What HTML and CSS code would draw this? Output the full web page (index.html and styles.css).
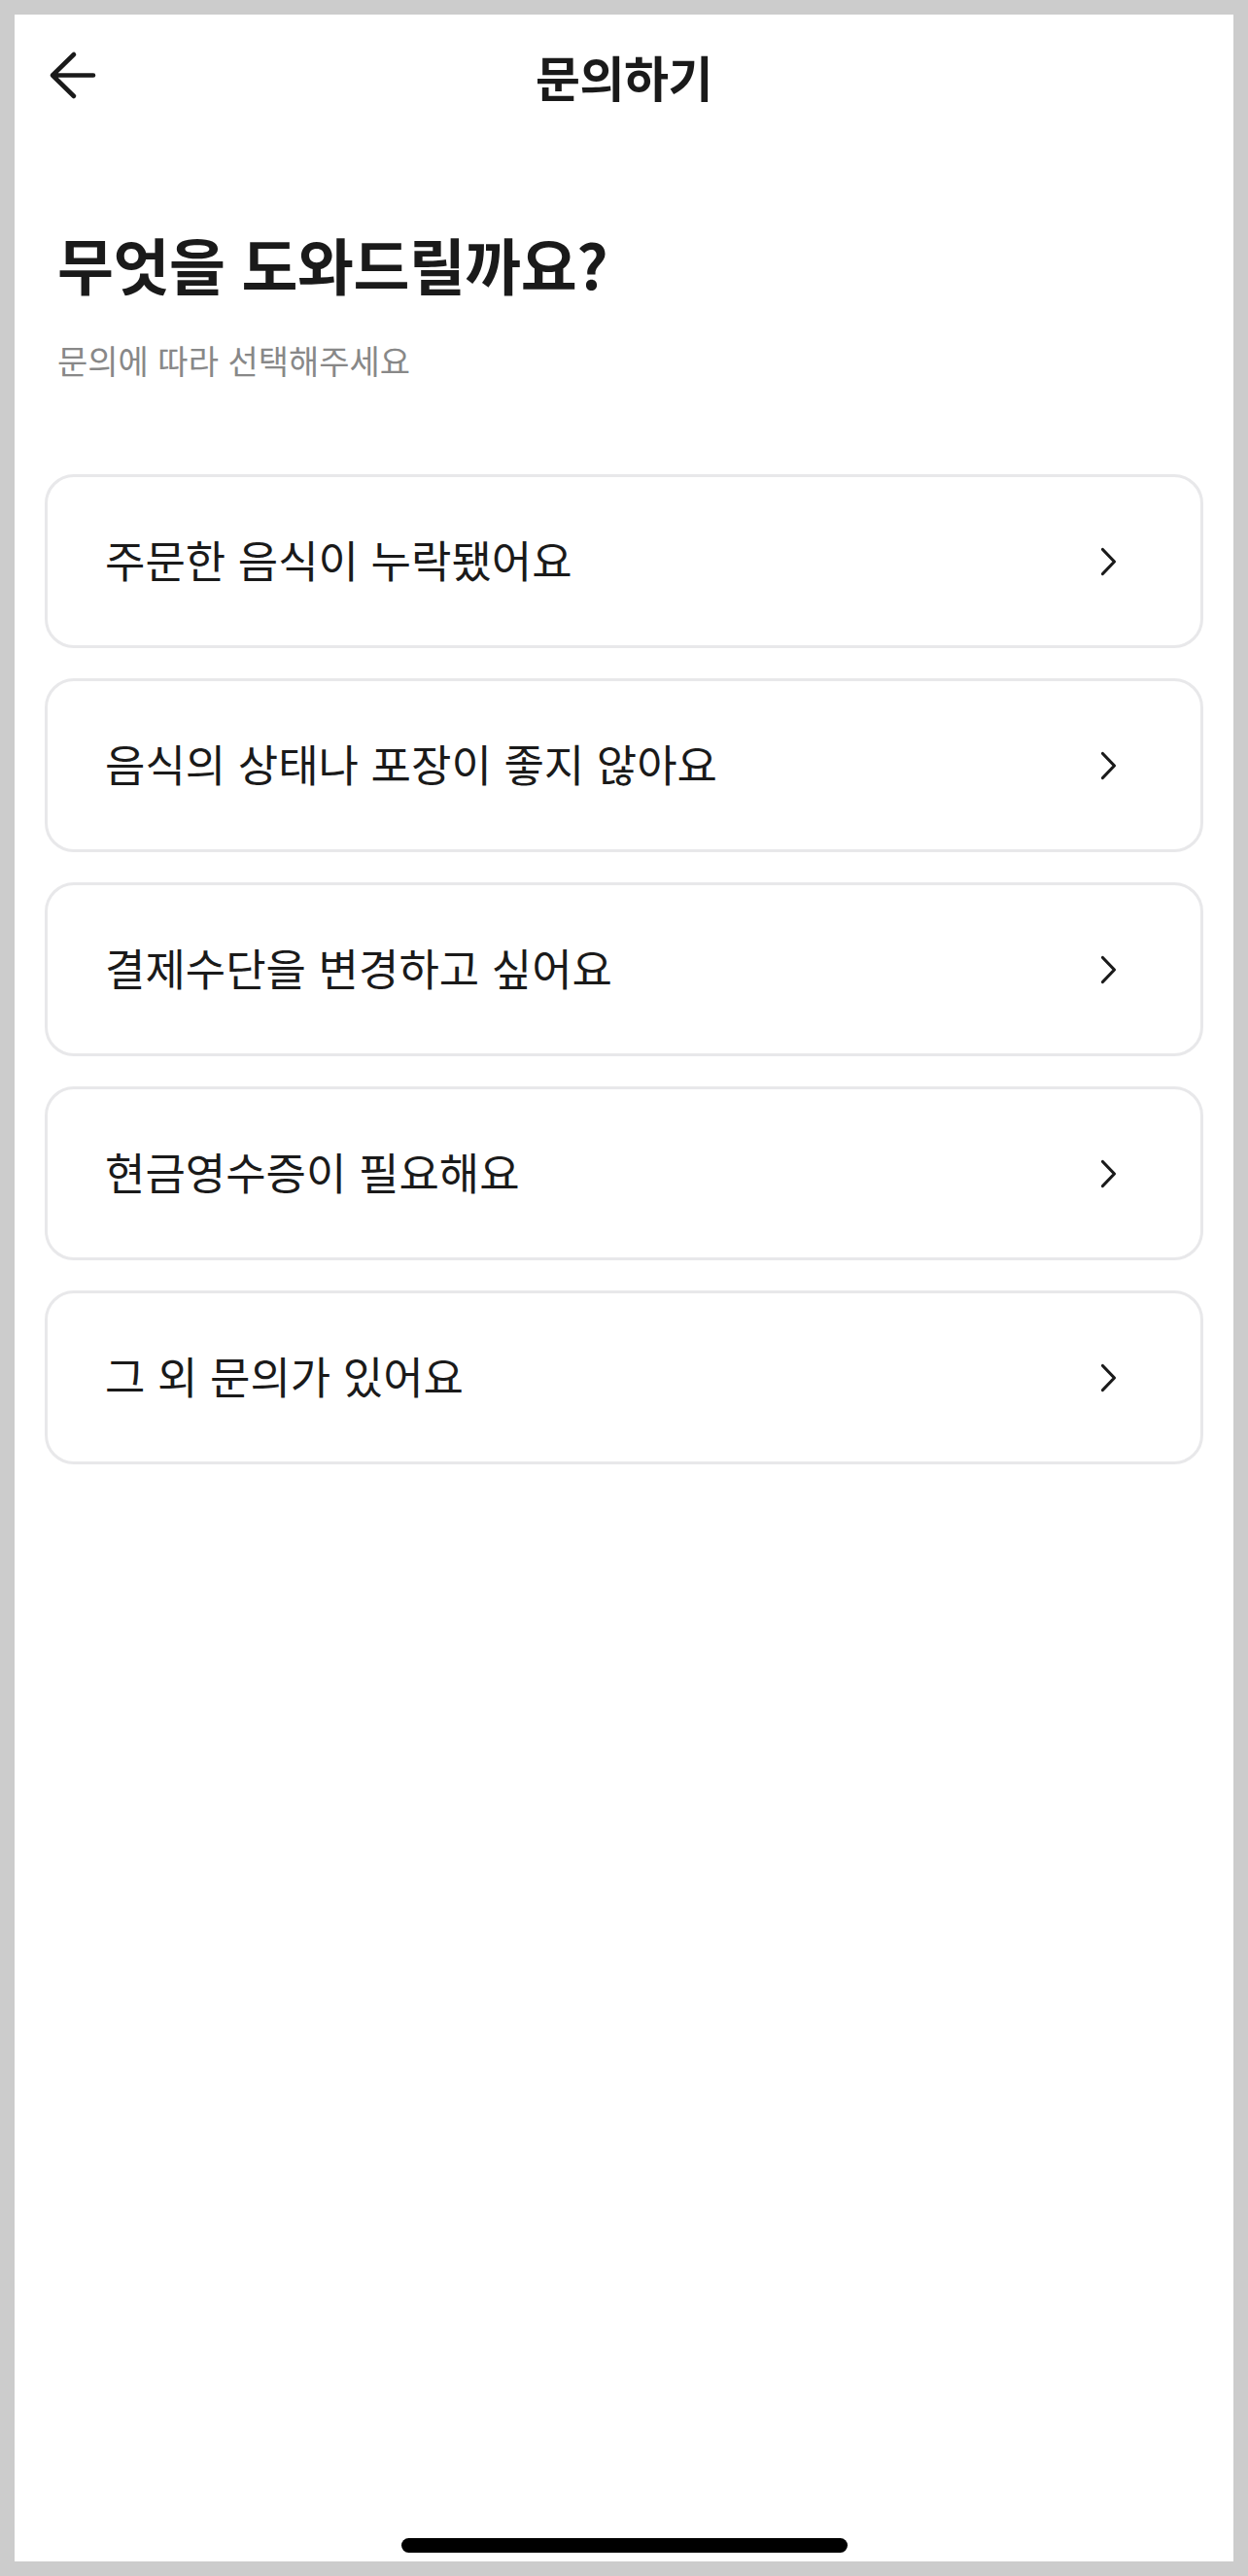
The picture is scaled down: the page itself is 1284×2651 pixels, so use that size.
FILE: index.html
```html
<!DOCTYPE html>
<html lang="ko">
<head>
    <meta charset="UTF-8">
    <meta name="viewport" content="width=device-width, initial-scale=1.0">
    <title>문의하기</title>
    <link rel="stylesheet" href="styles.css">
</head>
<body>
    <div class="screen">
        <header class="topbar">
            <button class="back" aria-label="뒤로가기">
                <svg width="52" height="52" viewBox="0 0 52 52" fill="none" stroke="#1a1a1a" stroke-width="4.6" stroke-linecap="round" stroke-linejoin="round">
                    <path d="M6 25.5H48M28 4L6 25.5L28 47"/>
                </svg>
            </button>
            <h1>문의하기</h1>
            <span></span>
        </header>

        <section class="intro">
            <h2>무엇을 도와드릴까요?</h2>
            <p>문의에 따라 선택해주세요</p>
        </section>

        <ul class="menu">
            <li class="menu-item">
                <span>주문한 음식이 누락됐어요</span>
                <svg class="chevron" width="24" height="32" viewBox="0 0 24 32"><polyline points="6.5,3.5 18.5,16 6.5,28.5"/></svg>
            </li>
            <li class="menu-item">
                <span>음식의 상태나 포장이 좋지 않아요</span>
                <svg class="chevron" width="24" height="32" viewBox="0 0 24 32"><polyline points="6.5,3.5 18.5,16 6.5,28.5"/></svg>
            </li>
            <li class="menu-item">
                <span>결제수단을 변경하고 싶어요</span>
                <svg class="chevron" width="24" height="32" viewBox="0 0 24 32"><polyline points="6.5,3.5 18.5,16 6.5,28.5"/></svg>
            </li>
            <li class="menu-item">
                <span>현금영수증이 필요해요</span>
                <svg class="chevron" width="24" height="32" viewBox="0 0 24 32"><polyline points="6.5,3.5 18.5,16 6.5,28.5"/></svg>
            </li>
            <li class="menu-item">
                <span>그 외 문의가 있어요</span>
                <svg class="chevron" width="24" height="32" viewBox="0 0 24 32"><polyline points="6.5,3.5 18.5,16 6.5,28.5"/></svg>
            </li>
        </ul>

        <div class="home-bar"></div>
    </div>
</body>
</html>
```

FILE: styles.css
```css
/* Inquiry screen */
* { margin: 0; padding: 0; box-sizing: border-box; }
body { background: #cccccc; font-family: "Noto Sans CJK KR", "Noto Sans", sans-serif; color: #1a1a1a; }
.screen { margin: 15px; height: 2621px; background: #fff; display: flex; flex-direction: column; }

.topbar { height: 130px; display: grid; grid-template-columns: 1fr auto 1fr; align-items: center; padding: 0 33px 4px; }
.back { background: none; border: none; width: 52px; height: 52px; display: flex; cursor: pointer; }
.topbar h1 { font-size: 50px; font-weight: 700; line-height: 60px; letter-spacing: -0.5px; }

.intro { padding: 86px 44px 0; }
.intro h2 { font-size: 63px; font-weight: 700; line-height: 80px; letter-spacing: -0.5px; }
.intro p { margin-top: 40px; font-size: 34px; line-height: 40px; color: #888888; }

.menu { list-style: none; display: flex; flex-direction: column; gap: 31px; padding: 97px 31px 0; }
.menu-item { height: 179px; border: 3px solid #e8e8ea; border-radius: 30px; display: flex; align-items: center; justify-content: space-between; padding: 0 83px 4px 59px; font-size: 45px; line-height: 56px; cursor: pointer; }
.menu-item svg { margin-top: 4px; }
.chevron { fill: none; stroke: #1a1a1a; stroke-width: 3.2; stroke-linecap: round; stroke-linejoin: round; }

.home-bar { margin: auto auto 9px; width: 459px; height: 15px; border-radius: 8px; background: #000; }
```
